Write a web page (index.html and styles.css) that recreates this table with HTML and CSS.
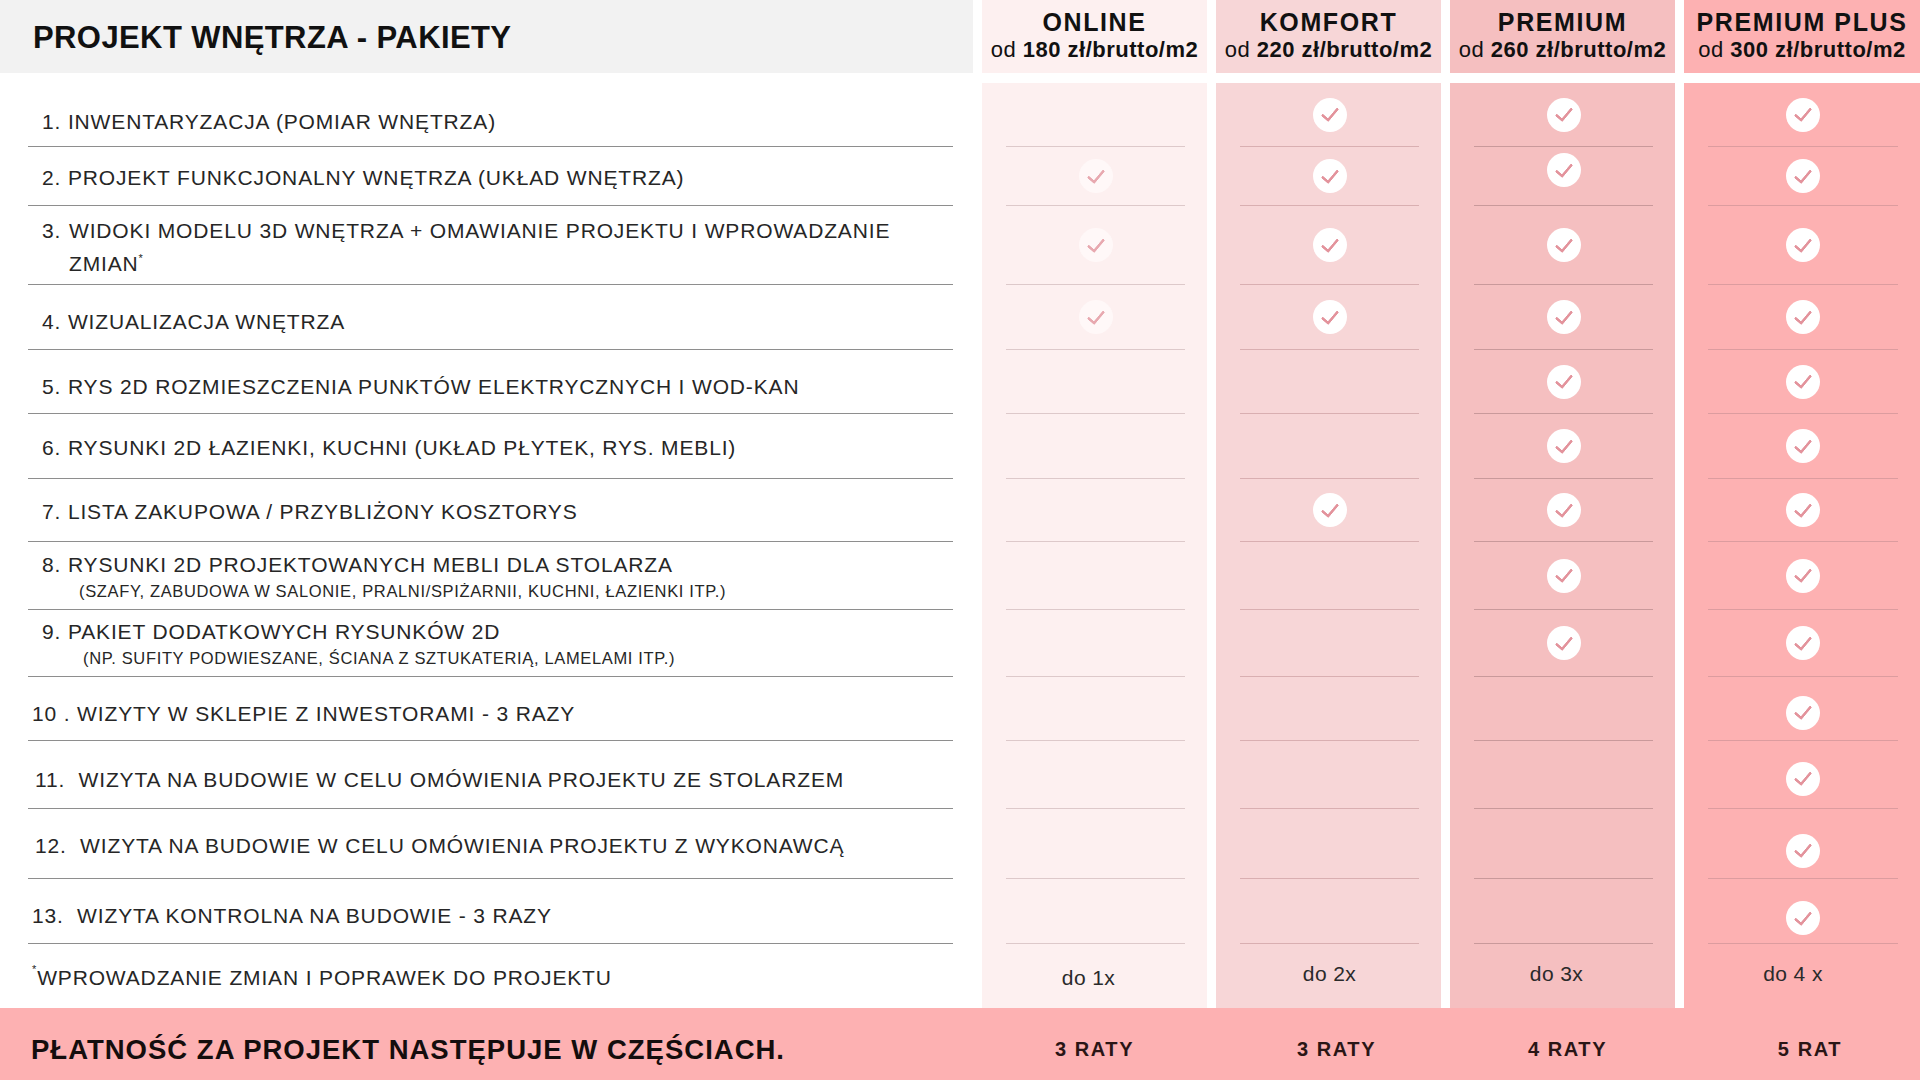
FILE: index.html
```html
<!DOCTYPE html>
<html lang="pl">
<head>
<meta charset="utf-8">
<title>Projekt wnętrza - pakiety</title>
<link rel="stylesheet" href="styles.css">
</head>
<body>
<div class="page">
  <div class="head">
    <div class="title-cell"><h1>PROJEKT WNĘTRZA - PAKIETY</h1></div>
    <div class="pkg c1"><div class="pkg-name">ONLINE</div><div class="price">od <b>180 zł/brutto/m2</b></div></div>
    <div class="pkg c2"><div class="pkg-name">KOMFORT</div><div class="price">od <b>220 zł/brutto/m2</b></div></div>
    <div class="pkg c3"><div class="pkg-name">PREMIUM</div><div class="price">od <b>260 zł/brutto/m2</b></div></div>
    <div class="pkg c4"><div class="pkg-name">PREMIUM PLUS</div><div class="price">od <b>300 zł/brutto/m2</b></div></div>
  </div>

  <div class="body">
    <!-- 1 -->
    <div class="item first"><div class="in"><span>1. INWENTARYZACJA (POMIAR WNĘTRZA)</span></div></div>
    <div class="cell c1"><div class="in"></div></div>
    <div class="cell c2"><div class="in first"><span class="chk"></span></div></div>
    <div class="cell c3"><div class="in first"><span class="chk"></span></div></div>
    <div class="cell c4"><div class="in first"><span class="chk"></span></div></div>
    <!-- 2 -->
    <div class="item"><div class="in"><span>2. PROJEKT FUNKCJONALNY WNĘTRZA (UKŁAD WNĘTRZA)</span></div></div>
    <div class="cell c1"><div class="in"><span class="chk faint"></span></div></div>
    <div class="cell c2"><div class="in"><span class="chk"></span></div></div>
    <div class="cell c3"><div class="in up"><span class="chk"></span></div></div>
    <div class="cell c4"><div class="in"><span class="chk"></span></div></div>
    <!-- 3 -->
    <div class="item"><div class="in hang"><span class="num">3.</span><span class="txt">WIDOKI MODELU 3D WNĘTRZA + OMAWIANIE PROJEKTU I WPROWADZANIE<br>ZMIAN<sup>*</sup></span></div></div>
    <div class="cell c1"><div class="in"><span class="chk faint"></span></div></div>
    <div class="cell c2"><div class="in"><span class="chk"></span></div></div>
    <div class="cell c3"><div class="in"><span class="chk"></span></div></div>
    <div class="cell c4"><div class="in"><span class="chk"></span></div></div>
    <!-- 4 -->
    <div class="item"><div class="in low"><span>4. WIZUALIZACJA WNĘTRZA</span></div></div>
    <div class="cell c1"><div class="in"><span class="chk faint"></span></div></div>
    <div class="cell c2"><div class="in"><span class="chk"></span></div></div>
    <div class="cell c3"><div class="in"><span class="chk"></span></div></div>
    <div class="cell c4"><div class="in"><span class="chk"></span></div></div>
    <!-- 5 -->
    <div class="item"><div class="in low"><span>5. RYS 2D ROZMIESZCZENIA PUNKTÓW ELEKTRYCZNYCH I WOD-KAN</span></div></div>
    <div class="cell c1"><div class="in"></div></div>
    <div class="cell c2"><div class="in"></div></div>
    <div class="cell c3"><div class="in"><span class="chk"></span></div></div>
    <div class="cell c4"><div class="in"><span class="chk"></span></div></div>
    <!-- 6 -->
    <div class="item"><div class="in"><span>6. RYSUNKI 2D ŁAZIENKI, KUCHNI (UKŁAD PŁYTEK, RYS. MEBLI)</span></div></div>
    <div class="cell c1"><div class="in"></div></div>
    <div class="cell c2"><div class="in"></div></div>
    <div class="cell c3"><div class="in"><span class="chk"></span></div></div>
    <div class="cell c4"><div class="in"><span class="chk"></span></div></div>
    <!-- 7 -->
    <div class="item"><div class="in"><span>7. LISTA ZAKUPOWA / PRZYBLIŻONY KOSZTORYS</span></div></div>
    <div class="cell c1"><div class="in"></div></div>
    <div class="cell c2"><div class="in"><span class="chk"></span></div></div>
    <div class="cell c3"><div class="in"><span class="chk"></span></div></div>
    <div class="cell c4"><div class="in"><span class="chk"></span></div></div>
    <!-- 8 -->
    <div class="item"><div class="in stack"><span>8. RYSUNKI 2D PROJEKTOWANYCH MEBLI DLA STOLARZA</span><span class="sub">(SZAFY, ZABUDOWA W SALONIE, PRALNI/SPIŻARNII, KUCHNI, ŁAZIENKI ITP.)</span></div></div>
    <div class="cell c1"><div class="in"></div></div>
    <div class="cell c2"><div class="in"></div></div>
    <div class="cell c3"><div class="in"><span class="chk"></span></div></div>
    <div class="cell c4"><div class="in"><span class="chk"></span></div></div>
    <!-- 9 -->
    <div class="item"><div class="in stack"><span>9. PAKIET DODATKOWYCH RYSUNKÓW 2D</span><span class="sub sub2">(NP. SUFITY PODWIESZANE, ŚCIANA Z SZTUKATERIĄ, LAMELAMI ITP.)</span></div></div>
    <div class="cell c1"><div class="in"></div></div>
    <div class="cell c2"><div class="in"></div></div>
    <div class="cell c3"><div class="in"><span class="chk"></span></div></div>
    <div class="cell c4"><div class="in"><span class="chk"></span></div></div>
    <!-- 10 -->
    <div class="item"><div class="in wide low"><span>10 . WIZYTY W SKLEPIE Z INWESTORAMI - 3 RAZY</span></div></div>
    <div class="cell c1"><div class="in"></div></div>
    <div class="cell c2"><div class="in"></div></div>
    <div class="cell c3"><div class="in"></div></div>
    <div class="cell c4"><div class="in low"><span class="chk"></span></div></div>
    <!-- 11 -->
    <div class="item"><div class="in wide2 low"><span>11.&nbsp; WIZYTA NA BUDOWIE W CELU OMÓWIENIA PROJEKTU ZE STOLARZEM</span></div></div>
    <div class="cell c1"><div class="in"></div></div>
    <div class="cell c2"><div class="in"></div></div>
    <div class="cell c3"><div class="in"></div></div>
    <div class="cell c4"><div class="in low"><span class="chk"></span></div></div>
    <!-- 12 -->
    <div class="item"><div class="in wide2"><span>12.&nbsp; WIZYTA NA BUDOWIE W CELU OMÓWIENIA PROJEKTU Z WYKONAWCĄ</span></div></div>
    <div class="cell c1"><div class="in"></div></div>
    <div class="cell c2"><div class="in"></div></div>
    <div class="cell c3"><div class="in"></div></div>
    <div class="cell c4"><div class="in lower"><span class="chk"></span></div></div>
    <!-- 13 -->
    <div class="item"><div class="in wide low"><span>13.&nbsp; WIZYTA KONTROLNA NA BUDOWIE - 3 RAZY</span></div></div>
    <div class="cell c1"><div class="in"></div></div>
    <div class="cell c2"><div class="in"></div></div>
    <div class="cell c3"><div class="in"></div></div>
    <div class="cell c4"><div class="in lower"><span class="chk"></span></div></div>
    <!-- footer row -->
    <div class="item last"><div class="in wide"><span><sup>*</sup>WPROWADZANIE ZMIAN I POPRAWEK DO PROJEKTU</span></div></div>
    <div class="cell c1 last"><div class="in shift"><span class="times">do 1x</span></div></div>
    <div class="cell c2 last"><div class="in up"><span class="times">do 2x</span></div></div>
    <div class="cell c3 last"><div class="in up shift"><span class="times">do 3x</span></div></div>
    <div class="cell c4 last"><div class="in up shift2"><span class="times">do 4 x</span></div></div>
  </div>

  <div class="pay">
    <div class="pay-title">PŁATNOŚĆ ZA PROJEKT NASTĘPUJE W CZĘŚCIACH.</div>
    <div class="rata">3 RATY</div>
    <div class="rata r2">3 RATY</div>
    <div class="rata r3">4 RATY</div>
    <div class="rata r4">5 RAT</div>
  </div>
</div>
</body>
</html>
```

FILE: styles.css
```css
* { box-sizing: border-box; }

html, body {
  margin: 0;
  padding: 0;
  background: #ffffff;
}

body {
  font-family: "Liberation Sans", Arial, sans-serif;
  color: #1e1e1e;
  width: 1920px;
  height: 1080px;
  overflow: hidden;
}

.page {
  width: 1920px;
  height: 1080px;
  display: flex;
  flex-direction: column;
}

/* ---------- header ---------- */
.head {
  display: grid;
  grid-template-columns: 973px 225px 225px 225px 236px;
  column-gap: 9px;
  height: 73px;
}

.title-cell {
  background: #f2f2f2;
  display: flex;
  align-items: center;
  padding-left: 33px;
}

.title-cell h1 {
  margin: 0;
  font-size: 31px;
  font-weight: 700;
  letter-spacing: 0.4px;
  color: #111;
  padding-top: 2px;
}

.pkg {
  display: flex;
  flex-direction: column;
  align-items: center;
  padding-top: 8px;
  color: #111;
}

.pkg-name {
  font-size: 25px;
  font-weight: 700;
  letter-spacing: 1.6px;
  line-height: 28px;
}

.price {
  font-size: 22px;
  letter-spacing: 0.5px;
  line-height: 28px;
  white-space: nowrap;
}

.price b { font-weight: 700; }

.c1 { background: #fdf0f0; }
.c2 { background: #f7d6d7; }
.c3 { background: #f5bfc0; }
.c4 { background: #fdb1b2; }

/* ---------- body ---------- */
.body {
  margin-top: 10px;
  display: grid;
  grid-template-columns: 973px 225px 225px 225px 236px;
  grid-template-rows: 64px 59px 79px 65px 64px 65px 63px 68px 67px 64px 68px 70px 65px 64px;
  column-gap: 9px;
}

.item {
  display: flex;
  padding: 0 20px 0 28px;
}

.item .in {
  flex: 1;
  display: flex;
  align-items: center;
  padding-left: 14px;
  padding-top: 4px;
  border-bottom: 1.5px solid #8e8e8e;
  font-size: 21px;
  letter-spacing: 0.85px;
  color: #262626;
  white-space: nowrap;
}

.item.first .in { padding-top: 14px; }
.item .in.low { padding-top: 10px; }
.item .in.wide { padding-left: 4px; }
.item .in.wide2 { padding-left: 7px; }
.item.last .in { border-bottom: none; }

.item .in.hang {
  align-items: flex-start;
  padding-top: 8px;
  line-height: 33px;
  white-space: normal;
}

.hang .num { width: 27px; flex: none; }

sup {
  font-size: 11px;
  vertical-align: top;
  line-height: 1;
  position: relative;
  top: -2px;
}

.hang sup { top: 6px; }

.item .in.stack {
  flex-direction: column;
  align-items: flex-start;
  justify-content: center;
  padding-top: 2px;
}

.stack .sub {
  font-size: 16.5px;
  letter-spacing: 0.65px;
  padding-left: 37px;
  margin-top: 5px;
}

.stack .sub2 { padding-left: 41px; }

.cell {
  display: flex;
}

.cell .in {
  flex: 1;
  display: flex;
  align-items: center;
  justify-content: center;
  margin: 0 22px 0 24px;
  border-bottom: 1.5px solid;
}

.c1 .in { border-color: #ddc9ca; }
.c2 .in { border-color: #d9afb1; }
.c3 .in { border-color: #c9999b; }
.c4 .in { border-color: #dc9c9f; }

.cell .in.up { padding-bottom: 12px; }
.cell .in.low { padding-top: 8px; }
.cell .in.lower { padding-top: 14px; }
.cell .in.first { padding-top: 0; }
.cell.last .in { border-bottom: none; padding-top: 4px; }
.cell.last .in.up { padding-top: 0; padding-bottom: 4px; }
.cell.last .in.shift { padding-right: 14px; }
.cell.last .in.shift2 { padding-right: 20px; }

.chk {
  width: 34px;
  height: 34px;
  border-radius: 50%;
  background: #ffffff;
  display: flex;
  align-items: center;
  justify-content: center;
}

.chk::after {
  content: "";
  width: 7px;
  height: 14px;
  border: solid #e3939c;
  border-width: 0 3.2px 3.2px 0;
  border-radius: 1.5px;
  transform: rotate(40deg);
  margin-top: -4px;
}

.chk.faint { background: #fff8f8; }
.chk.faint::after { border-color: #e8a9b0; }

.times {
  font-size: 21px;
  letter-spacing: 0.4px;
  color: #2a2a2a;
}

/* ---------- payment bar ---------- */
.pay {
  flex: 1;
  background: #fdb1b2;
  display: grid;
  grid-template-columns: 973px 225px 225px 225px 236px;
  column-gap: 9px;
  align-items: center;
  padding-top: 11px;
}

.pay-title {
  padding-left: 31px;
  font-size: 27.5px;
  font-weight: 700;
  letter-spacing: 1px;
  color: #140d0d;
}

.rata {
  text-align: center;
  font-size: 20px;
  font-weight: 700;
  letter-spacing: 1.6px;
  color: #2a1515;
}

.rata.r2 { padding-left: 16px; }
.rata.r3 { padding-left: 10px; }
.rata.r4 { padding-left: 16px; }
```
